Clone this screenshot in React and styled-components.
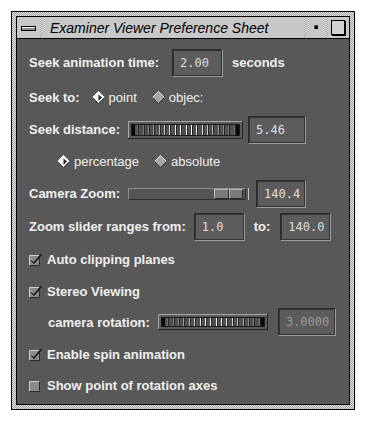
import styled, { createGlobalStyle } from 'styled-components'

const GlobalStyle = createGlobalStyle`
  html, body {
    margin: 0;
    background: #ffffff;
  }
  body {
    font-family: "Liberation Sans", Arial, sans-serif;
  }
`

const stipple = 'repeating-conic-gradient(#e6e6e6 0 25%, #9c9c9c 0 50%) 0 0 / 2px 2px'

const Page = styled.div`
    padding: 11px 0 0 11px;
`;

const Frame = styled.div`
    width: 344px;
    box-sizing: border-box;
    border: 1px solid #000;
    padding: 4px;
    background: ${stipple};
`;

const Inner = styled.div`
    border: 1px solid #000;
    display: flex;
    flex-direction: column;
`;

const TitleBar = styled.div`
    display: flex;
    height: 21px;
    background: #c8c8c8;
    border-bottom: 1px solid #000;
`;

const TitleSep = styled.div`
    width: 2px;
    background: ${stipple};
`;

const TitleButton = styled.div`
    width: ${({ $w }) => $w}px;
    display: flex;
    align-items: center;
    justify-content: center;
`;

const MenuBar = styled.div`
    width: 15px;
    height: 5px;
    box-sizing: border-box;
    border: 1px solid #000;
    background: linear-gradient(#ffffff 50%, #8c8c8c 50%);
    margin-top: 1px;
`;

const MinDot = styled.div`
    width: 4px;
    height: 4px;
    box-sizing: border-box;
    background: #000;
    border-top: 1px solid #555;
    border-left: 1px solid #555;
    margin-top: -2px;
`;

const MaxBox = styled.div`
    width: 12px;
    height: 13px;
    border: 1px solid #000;
    background: #d4d4d4;
    box-shadow: 1px 1px 0 #000;
    margin-left: -1px;
`;

const Title = styled.div`
    flex: 1;
    display: flex;
    align-items: center;
    padding-left: 8px;
    font-size: 14px;
    font-style: italic;
    color: #000;
    white-space: nowrap;
`;

const Content = styled.div`
    background: #585858;
    padding: 6px 0 4px 12px;
    display: flex;
    flex-direction: column;
    color: #f0f0f0;
`;

const Row = styled.div`
    height: ${({ $h }) => $h}px;
    display: flex;
    align-items: center;
    gap: ${({ $gap }) => $gap ?? 8}px;
    padding-left: ${({ $indent }) => $indent || 0}px;
`;

const Label = styled.span`
    font-size: 13px;
    font-weight: bold;
    white-space: nowrap;
    margin-left: ${({ $ml }) => $ml || 0}px;
`;

const Field = styled.div`
    width: ${({ $w }) => $w}px;
    height: 28px;
    box-sizing: border-box;
    margin-left: ${({ $ml }) => $ml || 0}px;
    border: 1px solid;
    border-color: #2a2a2a #9c9c9c #9c9c9c #2a2a2a;
    box-shadow: inset 1px 1px 0 #343434, inset -1px -1px 0 #343434;
    background: #5c5c5c;
    display: flex;
    align-items: center;
    padding-left: 7px;
    font-family: "DejaVu Sans Mono", "Liberation Mono", monospace;
    font-size: 12px;
    color: ${({ $dim }) => $dim ? '#9a9a9a' : '#dedede'};
`;

const RadioGroup = styled.div`
    display: flex;
    align-items: center;
    gap: 15px;
`;

const RadioItem = styled.label`
    display: flex;
    align-items: center;
    gap: 4px;
    font-size: 13px;
    white-space: nowrap;
`;

const CheckItem = styled.label`
    display: flex;
    align-items: center;
    gap: 5px;
    font-size: 13px;
    font-weight: bold;
    white-space: nowrap;
`;

const SliderTrack = styled.div`
    width: 118px;
    height: 12px;
    box-sizing: border-box;
    display: flex;
    justify-content: flex-end;
    border: 1px solid;
    border-color: #8e8e8e #2e2e2e #2e2e2e #8e8e8e;
    padding: 0 2px 0 0;
    background: #545454;
    box-shadow: 2px 0 0 #585858, 3px 0 0 #c4c4c4;
`;

const SliderThumb = styled.div`
    width: 29px;
    display: flex;
`;

const ThumbHalf = styled.div`
    flex: 1;
    background: #7a7a7a;
    border: 1px solid;
    border-color: #b8b8b8 #2a2a2a #2a2a2a #b8b8b8;
`;

const Diamond = ({ on }) => (
    <svg width="13" height="13" viewBox="0 0 13 13">
        <polygon points="6.5,0.5 12.5,6.5 6.5,12.5 0.5,6.5" fill={on ? '#f4f4f4' : '#a6a6a6'} />
        <polyline points="0.5,6.5 6.5,0.5 12.5,6.5" fill="none" stroke={on ? '#ffffff' : '#e6e6e6'} />
        <polyline points="0.5,6.5 6.5,12.5 12.5,6.5" fill="none" stroke="#303030" />
        {on && <polygon points="6.5,3.5 10,6.5 6.5,10" fill="#2a2a2a" />}
    </svg>
)

const CheckBox = ({ on }) => (
    <svg width="13" height="13" viewBox="0 0 13 13">
        <rect x="0.5" y="2.5" width="10" height="10" fill="#8a8a8a" />
        <polyline points="0.5,12.5 0.5,2.5 10.5,2.5" fill="none" stroke="#cccccc" />
        <polyline points="0.5,12.5 10.5,12.5 10.5,2.5" fill="none" stroke="#2a2a2a" />
        {on && <path d="M2.5 7 L5 10 L12.5 1" fill="none" stroke="#1c1c1c" strokeWidth="1.7" />}
        {on && <path d="M2 6 L4.6 8.6" fill="none" stroke="#c8c8c8" strokeWidth="0.8" />}
    </svg>
)

// ridged wheel: bright ridges in the middle, fading toward the black end caps
const Thumbwheel = ({ width, height }) => {
    const slotX = 4
    const slotW = width - 8
    const n = Math.round(slotW / 5.4)
    const ridges = []
    for (let i = 1; i < n; i++) {
        const x = Math.round(slotX + (i * slotW) / n)
        const t = Math.cos(((i / n) - 0.5) * Math.PI)
        const v = Math.round(105 + t * t * 140)
        ridges.push(
            <g key={i}>
                <rect x={x} y={4} width={1} height={height - 8} fill={`rgb(${v},${v},${v})`} />
                <rect x={x + 1} y={4} width={1} height={height - 8} fill="#262626" />
            </g>
        )
    }
    return (
        <svg width={width} height={height} viewBox={`0 0 ${width} ${height}`}>
            <rect x="0" y="0" width={width} height={height} fill="#5a5a5a" />
            <rect x="0" y="0" width={width} height="1" fill="#a8a8a8" />
            <rect x="0" y="0" width="1" height={height} fill="#a8a8a8" />
            <rect x="0" y={height - 1} width={width} height="1" fill="#222" />
            <rect x={width - 1} y="0" width="1" height={height} fill="#222" />
            <rect x="3" y="3" width={width - 6} height={height - 6} fill="#1a1a1a" />
            <rect x={slotX} y="4" width={slotW} height={height - 8} fill="#505050" />
            {ridges}
            <rect x={slotX} y="4" width="3" height={height - 8} fill="#080808" />
            <rect x={slotX + slotW - 3} y="4" width="3" height={height - 8} fill="#080808" />
        </svg>
    )
}

const App = () => {
    return (
        <Page>
            <GlobalStyle />
            <Frame>
                <Inner>
                    <TitleBar>
                        <TitleButton $w={23}><MenuBar /></TitleButton>
                        <TitleSep />
                        <Title>Examiner Viewer Preference Sheet</Title>
                        <TitleSep />
                        <TitleButton $w={20}><MinDot /></TitleButton>
                        <TitleSep />
                        <TitleButton $w={21}><MaxBox /></TitleButton>
                    </TitleBar>
                    <Content>
                        <Row $h={35}>
                            <Label>Seek animation time:</Label>
                            <Field $w={51} $ml={5}>2.00</Field>
                            <Label $ml={1}>seconds</Label>
                        </Row>
                        <Row $h={34} $gap={12}>
                            <Label>Seek to:</Label>
                            <RadioGroup>
                                <RadioItem><Diamond on />point</RadioItem>
                                <RadioItem><Diamond />objec:</RadioItem>
                            </RadioGroup>
                        </Row>
                        <Row $h={31}>
                            <Label>Seek distance:</Label>
                            <Thumbwheel width={115} height={18} />
                            <Field $w={58} $ml={-3}>5.46</Field>
                        </Row>
                        <Row $h={32} $indent={28}>
                            <RadioGroup>
                                <RadioItem><Diamond on />percentage</RadioItem>
                                <RadioItem><Diamond />absolute</RadioItem>
                            </RadioGroup>
                        </Row>
                        <Row $h={33}>
                            <Label>Camera Zoom:</Label>
                            <SliderTrack>
                                <SliderThumb>
                                    <ThumbHalf />
                                    <ThumbHalf />
                                </SliderThumb>
                            </SliderTrack>
                            <Field $w={50} $ml={2}>140.4</Field>
                        </Row>
                        <Row $h={33}>
                            <Label>Zoom slider ranges from:</Label>
                            <Field $w={51}>1.0</Field>
                            <Label $ml={1}>to:</Label>
                            <Field $w={51} $ml={2}>140.0</Field>
                        </Row>
                        <Row $h={33}>
                            <CheckItem><CheckBox on />Auto clipping planes</CheckItem>
                        </Row>
                        <Row $h={30}>
                            <CheckItem><CheckBox on />Stereo Viewing</CheckItem>
                        </Row>
                        <Row $h={32} $indent={19}>
                            <Label>camera rotation:</Label>
                            <Thumbwheel width={110} height={16} />
                            <Field $w={58} $ml={2} $dim>3.0000</Field>
                        </Row>
                        <Row $h={32}>
                            <CheckItem><CheckBox on />Enable spin animation</CheckItem>
                        </Row>
                        <Row $h={30}>
                            <CheckItem><CheckBox />Show point of rotation axes</CheckItem>
                        </Row>
                    </Content>
                </Inner>
            </Frame>
        </Page>
    )
}

export default App
